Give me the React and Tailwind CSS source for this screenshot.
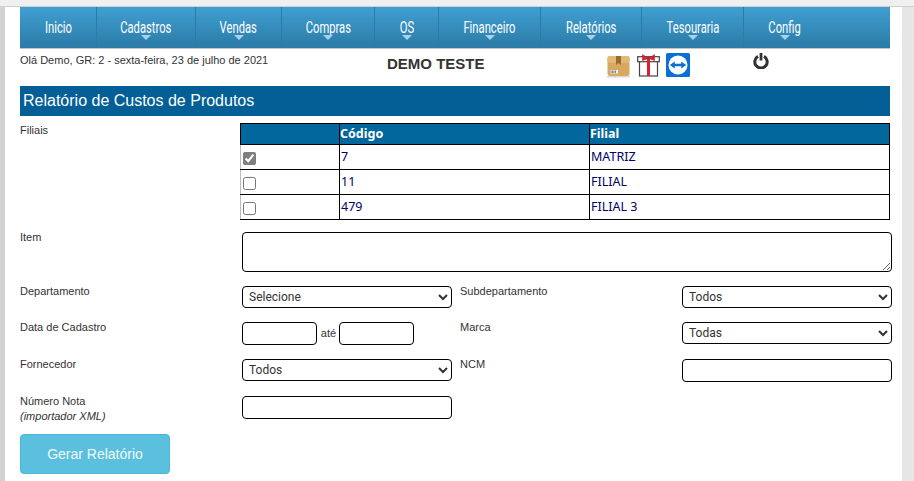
const menu = [
  { label: 'Inicio', w: 'w-[77px]' },
  { label: 'Cadastros', w: 'w-[99px]', arrow: true },
  { label: 'Vendas', w: 'w-[86px]', arrow: true },
  { label: 'Compras', w: 'w-[93px]', arrow: true },
  { label: 'OS', w: 'w-[64px]', arrow: true },
  { label: 'Financeiro', w: 'w-[102px]', arrow: true },
  { label: 'Relatórios', w: 'w-[101px]', arrow: true },
  { label: 'Tesouraria', w: 'w-[102px]', arrow: true },
  { label: 'Config', w: 'w-[82px]', arrow: true, last: true },
]

const filiais = [
  { codigo: '7', nome: 'MATRIZ', checked: true },
  { codigo: '11', nome: 'FILIAL' },
  { codigo: '479', nome: 'FILIAL 3' },
]

const inputClass = 'block h-[23px] w-[210px] rounded-[4px] border border-black bg-white'
const selectClass = 'block h-[22px] w-[210px] rounded-[4px] border border-black bg-white pl-[2px] text-[12px] text-[#333] [font-family:Roboto,sans-serif]'

function Label({ children, className = '' }) {
  return <div className={`text-[11px] leading-[15px] text-[#333] ${className}`}>{children}</div>
}

function BoxIcon() {
  return (
    <svg width="23" height="23" viewBox="0 0 23 23">
      <rect x="0.5" y="1" width="22" height="20" rx="2.5" fill="#d9a860" />
      <rect x="0.5" y="1" width="22" height="7" rx="2" fill="#e2b877" />
      <path d="M9 1h5v9l-2.500-2L9 10z" fill="#9a6b30" />
      <rect x="3" y="15" width="8" height="3.500" fill="#eee" />
      <path d="M4 15.500v2.500M5.500 15.500v2.500M7 15.500v2.500M8.500 15.500v2.500" stroke="#555" strokeWidth="0.7" />
      <rect x="0" y="21" width="23" height="1.500" fill="#d8d8d8" />
    </svg>
  )
}

function GiftIcon() {
  return (
    <svg width="23" height="24" viewBox="0 0 23 24">
      <rect x="2.500" y="7.500" width="18" height="15.500" fill="#fff" stroke="#444" strokeWidth="1.200" />
      <rect x="0.700" y="3.700" width="21.600" height="5" fill="#fff" stroke="#444" strokeWidth="1.200" />
      <rect x="10" y="4" width="3" height="19" fill="#d8232f" />
      <path d="M11.500 5.500L5.500 1.500v6zM11.500 5.500l6-4v6z" fill="#d8232f" stroke="#a81a24" strokeWidth="0.500" />
    </svg>
  )
}

function TeamViewerIcon() {
  return (
    <svg width="24" height="24" viewBox="0 0 24 24">
      <rect width="24" height="24" rx="1.500" fill="#0b6fd6" />
      <circle cx="12" cy="12" r="9.500" fill="#fff" />
      <path d="M3.800 12l5-3.600v2.300h6.400V8.400l5 3.600-5 3.600v-2.300H8.800v2.300z" fill="#0b6fd6" />
    </svg>
  )
}

function PowerIcon() {
  return (
    <svg width="16" height="16" viewBox="0 0 16 16">
      <path d="M5 3.400a6.200 6.200 0 1 0 6 0" fill="none" stroke="#333" strokeWidth="3" />
      <path d="M8 0v7.500" stroke="#333" strokeWidth="2.800" />
    </svg>
  )
}

function NavBar() {
  return (
    <nav className="flex h-[42px] w-[870px] border-b-[1px] border-[#c4c4c4] bg-gradient-to-b from-[#3f9fd2] to-[#2b7ba6] [font-family:Roboto,sans-serif]">
      {menu.map((item) => (
        <div
          key={item.label}
          className={`relative flex h-full flex-none justify-center pt-[11px] text-[17px] leading-[18px] text-white ${item.w} ${item.last ? '' : 'border-r border-[#2a7ba8]'}`}
        >
          <span className="inline-block scale-x-[0.66] whitespace-nowrap">{item.label}</span>
          {item.arrow && (
            <span className="absolute bottom-[8px] left-1/2 -ml-[5px] h-0 w-0 border-x-[5px] border-t-[5px] border-x-transparent border-t-[#a9d0e6]" />
          )}
        </div>
      ))}
    </nav>
  )
}

function InfoBar() {
  return (
    <div className="relative h-[37px] w-[870px] text-[#333]">
      <div className="pt-[4px] text-[11px] leading-[14px]">Olá Demo, GR: 2 - sexta-feira, 23 de julho de 2021</div>
      <div className="absolute left-[367px] top-[6px] text-[15px] font-bold leading-[17px]">DEMO TESTE</div>
      <div className="absolute left-[587px] top-[4px] flex items-start">
        <div className="mt-[2px]"><BoxIcon /></div>
        <div className="ml-[7px]"><GiftIcon /></div>
        <div className="ml-[6px]"><TeamViewerIcon /></div>
      </div>
      <div className="absolute left-[733px] top-[4px]"><PowerIcon /></div>
    </div>
  )
}

function FiliaisTable() {
  return (
    <table className="-ml-[2px] w-[650px] table-fixed border-collapse text-[12.5px] [font-family:'Noto_Sans',sans-serif]">
      <colgroup>
        <col className="w-[99px]" />
        <col className="w-[250px]" />
        <col />
      </colgroup>
      <thead>
        <tr className="h-[21px] bg-[#02679c] text-left font-bold text-white">
          <th className="border border-black" />
          <th className="border border-black">Código</th>
          <th className="border border-black">Filial</th>
        </tr>
      </thead>
      <tbody className="text-[#000066]">
        {filiais.map((f) => (
          <tr key={f.codigo} className="h-[25px]">
            <td className="border border-black border-l-[#bbb] pl-[2px]">
              <input type="checkbox" defaultChecked={f.checked} className="mt-[3px] block h-[13px] w-[13px] accent-[#7f7f7f]" />
            </td>
            <td className="border border-black pl-[1px]">{f.codigo}</td>
            <td className="border border-black pl-[1px]">{f.nome}</td>
          </tr>
        ))}
      </tbody>
    </table>
  )
}

function Form() {
  return (
    <div className="grid w-[872px] grid-cols-[222px_218px_222px_210px]">
      <Label>Filiais</Label>
      <div className="col-span-3 w-[650px]"><FiliaisTable /></div>

      <Label className="mt-[10px]">Item</Label>
      <div className="col-span-3 mt-[12px] h-[40px]">
        <textarea className="block h-[40px] w-[650px] rounded-[4px] border border-black bg-white" />
      </div>

      <Label className="mt-[12px]">Departamento</Label>
      <div className="mt-[14px]">
        <select className={selectClass}><option>Selecione</option></select>
      </div>
      <Label className="mt-[12px]">Subdepartamento</Label>
      <div className="mt-[14px]">
        <select className={selectClass}><option>Todos</option></select>
      </div>

      <Label className="mt-[12px]">Data de Cadastro</Label>
      <div className="mt-[14px] flex h-[23px] items-center">
        <input className="h-[23px] w-[75px] rounded-[4px] border border-black" />
        <span className="w-[22px] pl-[1px] text-center text-[11px] text-[#333]">até</span>
        <input className="h-[23px] w-[75px] rounded-[4px] border border-black" />
      </div>
      <Label className="mt-[12px]">Marca</Label>
      <div className="mt-[14px]">
        <select className={selectClass}><option>Todas</option></select>
      </div>

      <Label className="mt-[12px]">Fornecedor</Label>
      <div className="mt-[14px]">
        <select className={selectClass}><option>Todos</option></select>
      </div>
      <Label className="mt-[12px]">NCM</Label>
      <div className="mt-[14px]"><input className={inputClass} /></div>

      <Label className="mt-[12px]">
        Número Nota
        <br />
        <i>(importador XML)</i>
      </Label>
      <div className="mt-[14px]"><input className={inputClass} /></div>
      <div className="col-span-2" />

      <button className="col-span-4 mt-[10px] h-[40px] w-[150px] rounded-[4px] border border-[#46b8da] bg-[#5bc0de] text-[14px] text-white/90">
        Gerar Relatório
      </button>
    </div>
  )
}

export default function App() {
  return (
    <div className="h-[481px] w-[914px] overflow-hidden bg-white [font-family:'Liberation_Sans',Arial,sans-serif]">
      <div className="h-[7px] border-b border-[#cfcfcf] bg-[#f0f0f0]" />
      <div className="flex h-[474px]">
        <div className="w-[5px] flex-none bg-[#d2d2d2]" />
        <main className="w-[897px] flex-none pl-[15px]">
          <NavBar />
          <InfoBar />
          <h1 className="h-[30px] w-[870px] bg-[#045f96] pl-[3px] text-[16px] font-normal leading-[30px] text-white">
            Relatório de Custos de Produtos
          </h1>
          <div className="pt-[7px]"><Form /></div>
        </main>
        <div className="w-[12px] flex-none bg-[#e6e6e6]" />
      </div>
    </div>
  )
}
